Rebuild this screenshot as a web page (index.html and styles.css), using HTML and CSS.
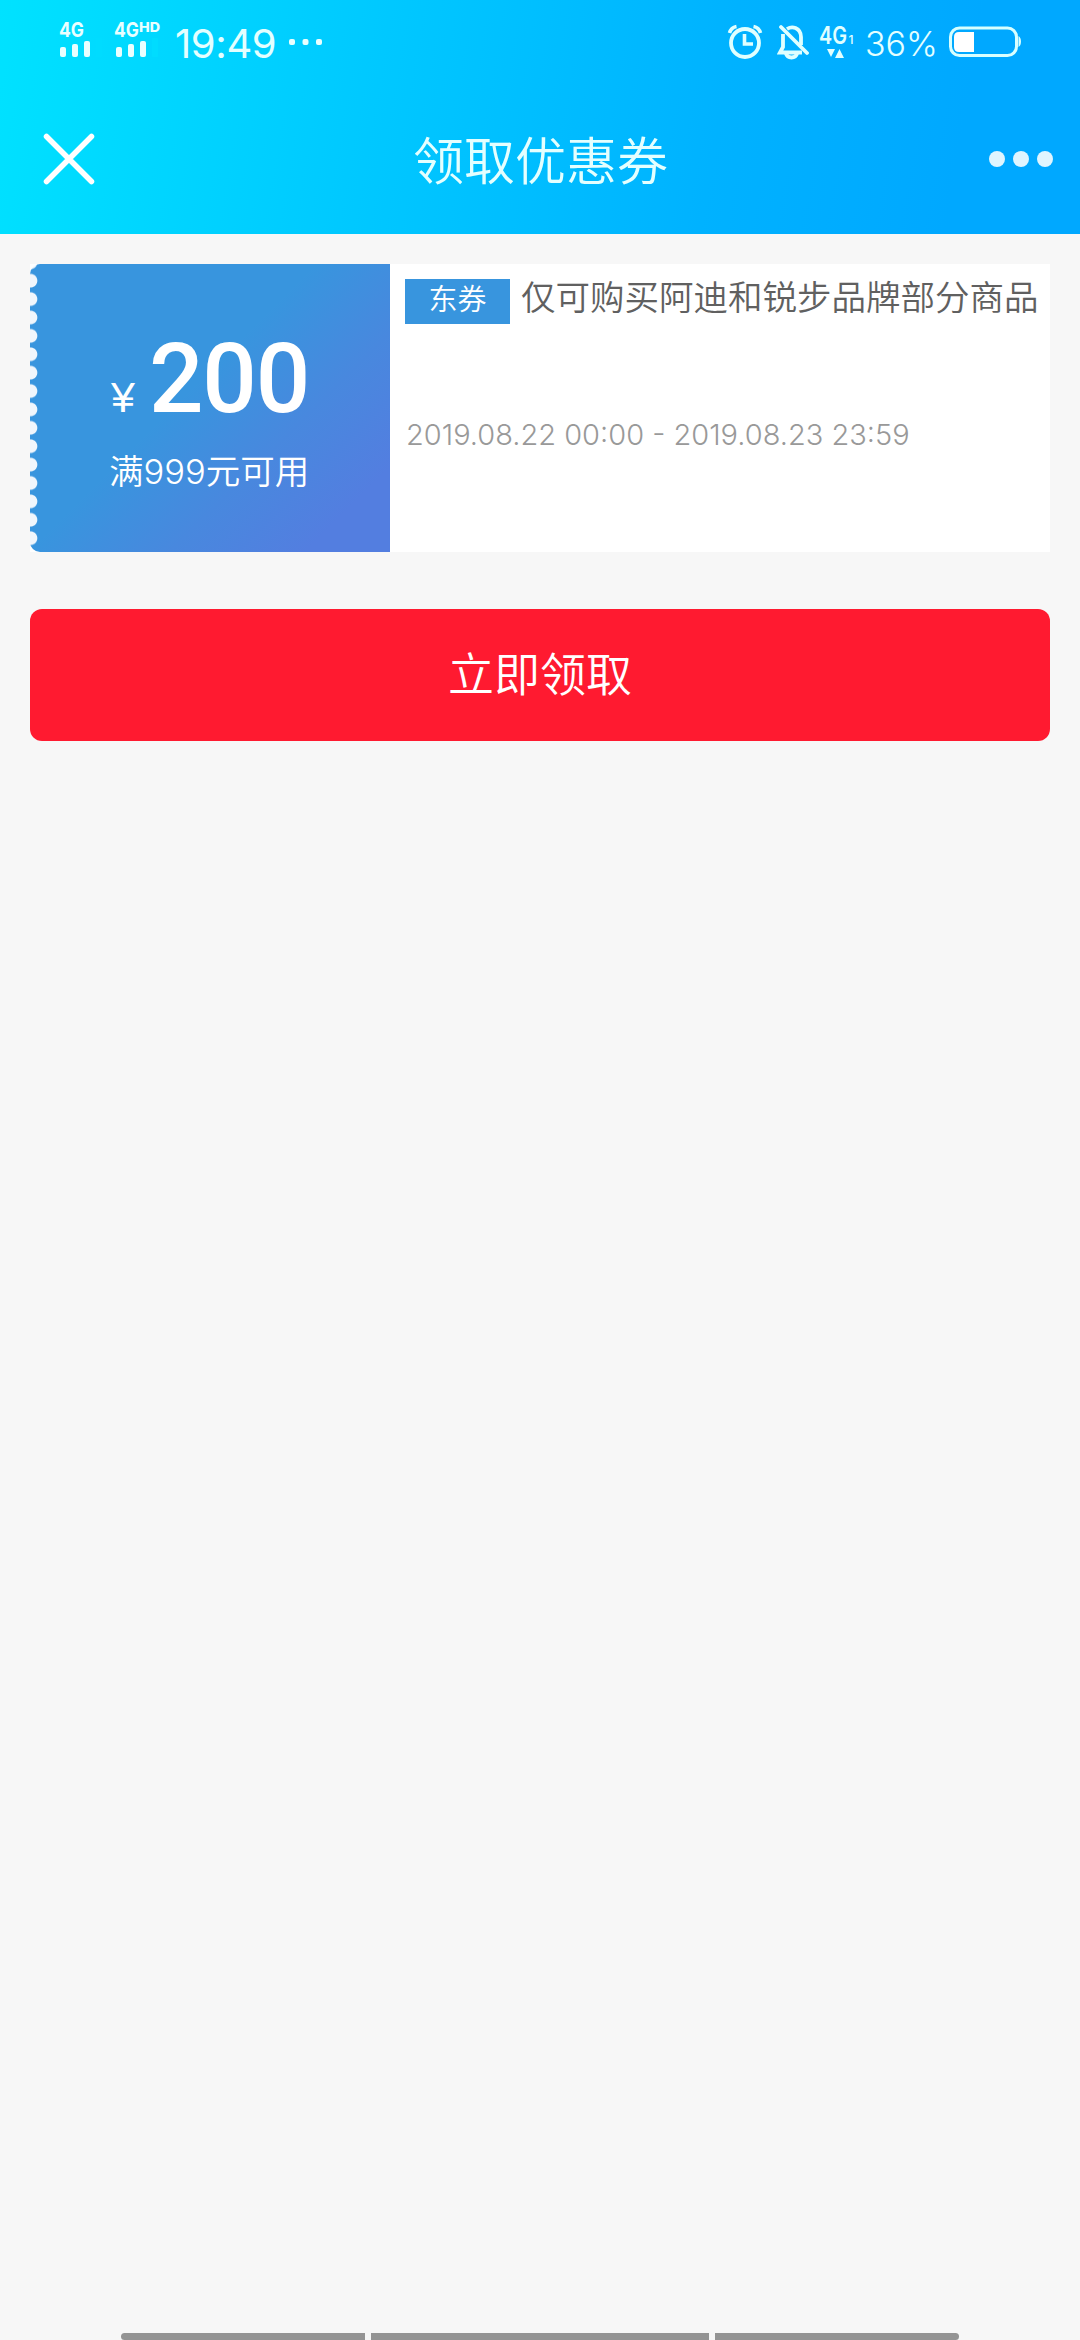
FILE: index.html
```html
<!DOCTYPE html>
<html lang="zh-CN">
<head>
    <meta charset="UTF-8">
    <meta name="viewport" content="width=device-width, initial-scale=1.0">
    <title>领取优惠券</title>
    <link rel="stylesheet" href="styles.css">
</head>
<body>
    <header class="header">
        <div class="status-bar">
            <div class="status-left">
                <svg class="signals" width="116" height="56" viewBox="-6 -6 116 56">
                    <g fill="#eaffff">
                        <text class="net" x="0" y="17" textLength="25" lengthAdjust="spacingAndGlyphs">4G</text>
                        <rect x="1" y="27" width="6" height="10" rx="2"/>
                        <rect x="13" y="24" width="6" height="13" rx="2"/>
                        <rect x="25" y="21" width="6" height="16" rx="2"/>
                        <text class="net" x="55" y="17" textLength="25" lengthAdjust="spacingAndGlyphs">4G</text>
                        <text class="net-hd" x="80" y="12" textLength="21" lengthAdjust="spacingAndGlyphs">HD</text>
                        <rect x="57" y="27" width="6" height="10" rx="2"/>
                        <rect x="69" y="24" width="6" height="13" rx="2"/>
                        <rect x="81" y="21" width="6" height="16" rx="2"/>
                    </g>
                    <g fill="#00dcff">
                        <rect x="37" y="18" width="6" height="19" rx="1"/>
                        <rect x="93" y="18" width="6" height="19" rx="1"/>
                    </g>
                </svg>
                <span class="time">19:49</span>
                <svg width="34" height="8" viewBox="0 0 34 8" fill="#eaffff">
                    <rect x="0" y="1" width="6" height="6" rx="2"/>
                    <rect x="13.5" y="1" width="6" height="6" rx="2"/>
                    <rect x="27" y="1" width="6" height="6" rx="2"/>
                </svg>
            </div>
            <div class="status-right">
                <svg class="alarm" width="36" height="36" viewBox="0 0 36 36" fill="none" stroke="#e0ffff">
                    <circle cx="18" cy="19" r="14" stroke-width="3.8"/>
                    <path d="M17.5 10v10H26" stroke-width="3.6"/>
                    <path d="M2.5 9Q4 3.5 9.5 2.5M33.5 9Q32 3.5 26.5 2.5" stroke-width="3.6"/>
                </svg>
                <svg class="mute" width="32" height="36" viewBox="0 0 32 36" fill="none" stroke="#e0ffff" stroke-width="3.8">
                    <path d="M6 10V23L3 28.5H25M10 5Q14 2.5 18.5 4Q24 6.5 24 13V21"/>
                    <path d="M9 29.5Q10 33.5 14.5 33.5T20 29.5"/>
                    <path d="M4 3L30 29" stroke-linecap="round"/>
                </svg>
                <svg class="data" width="40" height="52" viewBox="-2 -8 40 52" fill="#e0ffff">
                    <text class="net-data" x="0" y="20" textLength="28" lengthAdjust="spacingAndGlyphs">4G</text>
                    <text class="net-slot" x="29.5" y="20">1</text>
                    <path d="M8 25H16L12 33ZM16 34H25L20.5 25Z"/>
                </svg>
                <span class="percent">36%</span>
                <svg width="72" height="32" viewBox="0 0 72 32">
                    <rect x="1.5" y="2" width="66" height="27.5" rx="9" fill="none" stroke="#d8ffff" stroke-width="3"/>
                    <path d="M10 6H25V26H10Q5 26 5 21V11Q5 6 10 6Z" fill="#fff"/>
                    <path d="M69.5 10Q72 11.5 72 15.5T69.5 21Z" fill="#d8ffff"/>
                </svg>
            </div>
        </div>
        <div class="nav-bar">
            <svg class="close" width="52" height="52" viewBox="0 0 52 52" stroke="#fff" stroke-width="5.5" stroke-linecap="round">
                <path d="M3.5 3.5L48.5 48.5M48.5 3.5L3.5 48.5"/>
            </svg>
            <h1 class="title">领取优惠券</h1>
            <div class="more"><i></i><i></i><i></i></div>
        </div>
    </header>

    <main class="content">
        <div class="coupon">
            <div class="coupon-left">
                <div class="amount"><span class="yen">¥</span><span class="number">200</span></div>
                <div class="limit">满<span class="limit-number">999</span>元可用</div>
            </div>
            <div class="coupon-right">
                <div class="coupon-name"><span class="tag">东券</span><span class="name">仅可购买阿迪和锐步品牌部分商品</span></div>
                <div class="date">2019.08.22 00:00 - 2019.08.23 23:59</div>
            </div>
        </div>
        <button class="get-btn">立即领取</button>
    </main>

    <!-- Gesture bar -->
    <footer class="gesture-bar">
        <span class="side-left"></span>
        <span class="middle"></span>
        <span class="side-right"></span>
    </footer>
</body>
</html>
```
FILE: styles.css
```css
* {
    box-sizing: border-box;
}

body {
    margin: 0;
    height: 2340px;
    display: flex;
    flex-direction: column;
    font-family: Inter, "Noto Sans CJK SC", sans-serif;
    font-weight: 350;
    background-color: #f7f7f7;
}

/* Header */
.header {
    height: 234px;
    background: linear-gradient(100deg, #00e2ff 0%, #00c8ff 35%, #00b2ff 66%, #00a8ff 88%, #00a8ff 100%);
    color: #e4ffff;
}

.status-bar {
    height: 84px;
    padding: 0 59px 0 53px;
    display: flex;
    justify-content: space-between;
    align-items: center;
}

.status-left,
.status-right {
    display: flex;
    align-items: center;
}

.signals {
    margin-right: 6px;
}

.net {
    font: 700 20px Inter, sans-serif;
}

.net-hd {
    font: 800 13px Inter, sans-serif;
}

.net-data {
    font: 600 24px Inter, sans-serif;
}

.net-slot {
    font: 500 12px Inter, sans-serif;
}

.time {
    width: 114px;
    font-size: 40px;
    font-weight: 400;
    line-height: 48px;
    letter-spacing: -0.4px;
    padding-top: 4px;
}

.alarm {
    margin-right: 14px;
}

.mute {
    margin-right: 8px;
}

.data {
    margin-right: 8px;
}

.percent {
    width: 71px;
    margin-right: 13px;
    padding-top: 3px;
    font-size: 34px;
    line-height: 40px;
}

.nav-bar {
    height: 150px;
    padding: 0 27px 0 43px;
    display: flex;
    align-items: center;
    justify-content: space-between;
}

.title {
    margin: 0;
    padding: 5px 3px 0 0;
    font-size: 51px;
    font-weight: 350;
    line-height: 60px;
}

.more {
    display: flex;
    gap: 8px;
}

.more i {
    width: 16px;
    height: 16px;
    border-radius: 50%;
    background: #e0f5ff;
}

/* Coupon */
.content {
    flex: 1;
    padding: 30px 30px 0;
}

.coupon {
    height: 288px;
    display: flex;
    background: #fff;
}

.coupon-left {
    width: 360px;
    padding: 69px 0 0 79px;
    color: #fff;
    border-radius: 10px 0 0 10px;
    background:
        radial-gradient(circle at 0.5px 9.2px, #f0f6fc 6.3px, transparent 7.3px) 0 7.5px / 8px 18.4px repeat-y,
        linear-gradient(135deg, #3895de 0%, #3895de 44%, #4888de 66%, #537ee0 87%, #537ee0 100%);
}

.amount {
    height: 90px;
    display: flex;
    align-items: baseline;
}

.yen {
    width: 40px;
    padding-left: 2px;
    font-family: "Liberation Sans", sans-serif;
    font-size: 43px;
    line-height: 50px;
}

.number {
    font-family: Roboto, sans-serif;
    font-size: 96px;
    font-weight: 500;
    line-height: 92px;
    letter-spacing: -1.2px;
}

.limit {
    margin-top: 27px;
    font-size: 34.5px;
    line-height: 44px;
}

.limit-number {
    font-weight: 300;
}

.coupon-right {
    flex: 1;
    padding: 15px 0 0 15px;
}

.coupon-name {
    height: 45px;
    display: flex;
    gap: 11px;
}

.tag {
    width: 105px;
    height: 45px;
    background: #3895de;
    color: #fff;
    font-size: 29px;
    line-height: 42px;
    text-align: center;
}

.name {
    color: #606060;
    font-size: 34.5px;
    line-height: 38px;
    white-space: nowrap;
}

.date {
    margin-top: 93px;
    padding-left: 1px;
    color: #999;
    font-size: 29px;
    font-weight: 350;
    line-height: 36px;
    font-feature-settings: "case";
    white-space: nowrap;
}

.get-btn {
    display: block;
    width: 100%;
    height: 132px;
    margin-top: 57px;
    padding: 0 0 8px;
    border: none;
    border-radius: 12px;
    background: #ff1a30;
    color: #fff;
    font-family: inherit;
    font-size: 46px;
    font-weight: 350;
}

/* Gesture bar */
.gesture-bar {
    display: flex;
    gap: 6px;
    height: 7px;
    padding: 0 121px;
}

.gesture-bar span {
    background: #949494;
}

.side-left {
    width: 244px;
    border-radius: 4px 0 0 4px;
}

.middle {
    flex: 1;
}

.side-right {
    width: 244px;
    border-radius: 0 4px 4px 0;
}
```
